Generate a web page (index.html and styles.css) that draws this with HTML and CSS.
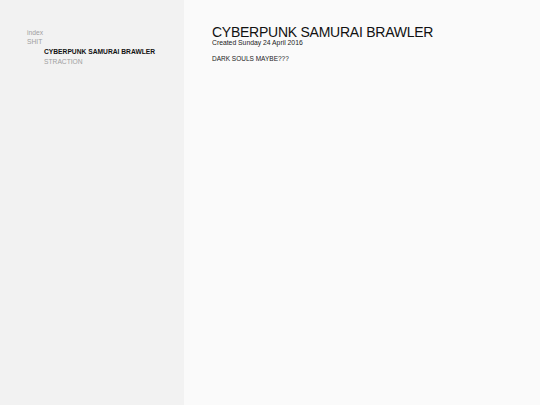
FILE: index.html
```html
<!DOCTYPE html>
<html>
<head>
<meta charset="utf-8">
<link rel="stylesheet" href="styles.css">
</head>
<body>
<div class="layout">
  <nav class="sidebar">
    <ul class="nav">
      <li class="nav-item">index</li>
      <li class="nav-item">SHIT
        <ul class="subnav">
          <li class="nav-item current">CYBERPUNK SAMURAI BRAWLER</li>
          <li class="nav-item">STRACTION</li>
        </ul>
      </li>
    </ul>
  </nav>
  <main class="content">
    <h1 class="title">CYBERPUNK SAMURAI BRAWLER</h1>
    <div class="meta">Created Sunday 24 April 2016</div>
    <p class="body-text">DARK SOULS MAYBE???</p>
  </main>
</div>
</body>
</html>
```
FILE: styles.css
```css
html, body { margin: 0; padding: 0; height: 100%; }
body { font-family: "Liberation Sans", Arial, sans-serif; background: #fafafa; color: #222; }
.layout { display: flex; height: 405px; }
.sidebar { width: 184px; background: #f2f2f2; padding: 27.7px 0 0 27px; box-sizing: border-box; flex: none; }
.nav, .subnav { list-style: none; margin: 0; padding: 0; }
.nav-item { font-size: 6.7px; line-height: 9.7px; color: #a0a0a0; }
.subnav { padding-left: 17px; }
.current { color: #111; font-weight: bold; }
.content { padding: 25.5px 0 0 28px; }
.title { font-size: 14px; letter-spacing: -0.25px; font-weight: normal; margin: 0; line-height: 13px; color: #111; }
.meta { font-size: 6.8px; line-height: 7px; color: #222; }
.body-text { font-size: 6.5px; line-height: 8px; margin: 9px 0 0; color: #222; }
```
